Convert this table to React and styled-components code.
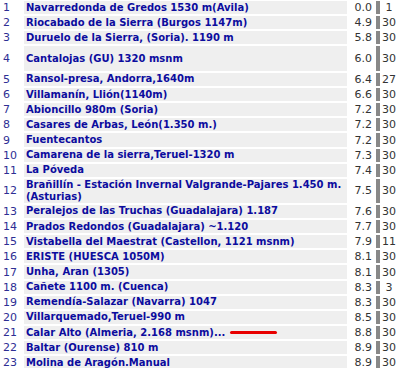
import React from 'react';
import styled, { createGlobalStyle } from 'styled-components';

const GlobalStyle = createGlobalStyle`
  body {
    margin: 0;
    background: #ffffff;
    font-family: "DejaVu Sans", Verdana, sans-serif;
  }
`

const Table = styled.table`
  border-collapse: separate;
  border-spacing: 0 2px;
  margin-top: -1px;
  width: 398px;
  table-layout: fixed;
  td {
    box-sizing: border-box;
  }
`

const NumCell = styled.td`
  width: 24px;
  padding: 0 0 0 3px;
  font-size: 11px;
  color: #2e2e94;
  vertical-align: middle;
  line-height: 13px;
`

const NameCell = styled.td`
  width: 323px;
  height: ${props => props.tall ? '24.5px' : '13.15px'};
  padding: 0 2px;
  background: #efefef;
  font-size: 10px;
  font-weight: bold;
  color: #0c0c9e;
  line-height: 12px;
  vertical-align: middle;
`

const ValCell = styled.td`
  width: 29px;
  padding: 0 4px 0 0;
  text-align: right;
  font-size: 11px;
  color: #333333;
  vertical-align: middle;
`

const RankCell = styled.td`
  width: 22px;
  padding: 0;
  border-left: 4px solid #888888;
  text-align: center;
  font-size: 11px;
  color: #333333;
  vertical-align: middle;
`

const RedMark = styled.span`
  display: inline-block;
  width: 47px;
  height: 3px;
  margin-left: 5px;
  vertical-align: middle;
  background: #e80000;
  border-radius: 2px;
`

const rows = [
  ['Navarredonda de Gredos 1530 m(Avila)', '0.0', '1'],
  ['Riocabado de la Sierra (Burgos 1147m)', '4.9', '30'],
  ['Duruelo de la Sierra, (Soria). 1190 m', '5.8', '30'],
  ['Cantalojas (GU) 1320 msnm', '6.0', '30', true],
  ['Ransol-presa, Andorra,1640m', '6.4', '27'],
  ['Villamanín, Llión(1140m)', '6.6', '30'],
  ['Abioncillo 980m (Soria)', '7.2', '30'],
  ['Casares de Arbas, León(1.350 m.)', '7.2', '30'],
  ['Fuentecantos', '7.2', '30'],
  ['Camarena de la sierra,Teruel-1320 m', '7.3', '30'],
  ['La Póveda', '7.4', '30'],
  ['Brañillín - Estación Invernal Valgrande-Pajares 1.450 m. (Asturias)', '7.5', '30'],
  ['Peralejos de las Truchas (Guadalajara) 1.187', '7.6', '30'],
  ['Prados Redondos (Guadalajara) ~1.120', '7.7', '30'],
  ['Vistabella del Maestrat (Castellon, 1121 msnm)', '7.9', '11'],
  ['ERISTE (HUESCA 1050M)', '8.1', '30'],
  ['Unha, Aran (1305)', '8.1', '30'],
  ['Cañete 1100 m. (Cuenca)', '8.3', '3'],
  ['Remendía-Salazar (Navarra) 1047', '8.3', '30'],
  ['Villarquemado,Teruel-990 m', '8.5', '30'],
  ['Calar Alto (Almeria, 2.168 msnm)...', '8.8', '30', false, true],
  ['Baltar (Ourense) 810 m', '8.9', '30'],
  ['Molina de Aragón.Manual', '8.9', '30'],
]

export default function App() {
  return (
    <>
      <GlobalStyle />
      <Table>
        <tbody>
          {rows.map(([name, val, rank, tall, marked], i) => (
            <tr key={i}>
              <NumCell>{i + 1}</NumCell>
              <NameCell tall={tall}>
                {name}
                {marked && <RedMark />}
              </NameCell>
              <ValCell>{val}</ValCell>
              <RankCell>{rank}</RankCell>
            </tr>
          ))}
        </tbody>
      </Table>
    </>
  );
}
